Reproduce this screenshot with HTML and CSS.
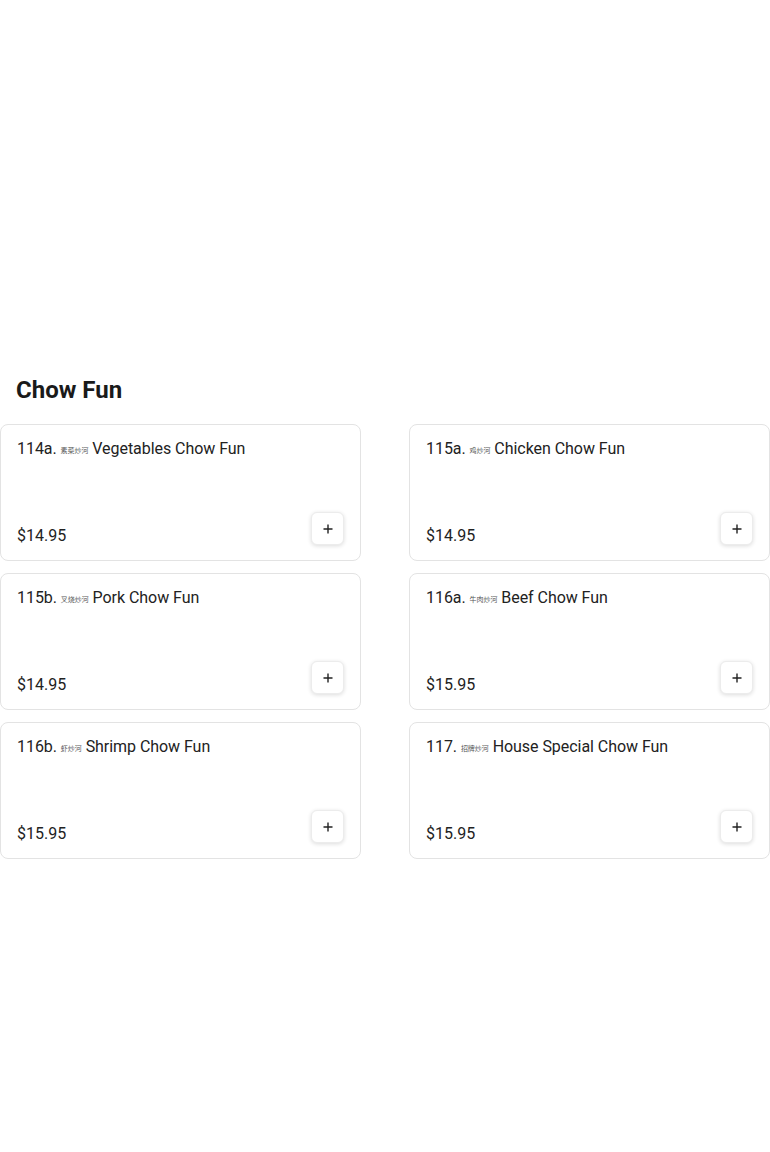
FILE: index.html
```html
<!DOCTYPE html>
<html lang="en">
<head>
<meta charset="utf-8">
<title>Chow Fun</title>
<link rel="stylesheet" href="styles.css">
</head>
<body>
<div class="hero"></div>
<section class="section">
  <h2 class="section-title">Chow Fun</h2>
  <div class="grid">
    <div class="card">
      <div class="card-title">114a. <span class="zh">素菜炒河</span> Vegetables Chow Fun</div>
      <div class="card-bottom">
        <span class="price">$14.95</span>
        <button class="add" aria-label="Add"><svg viewBox="0 0 12 12" width="12" height="12"><path d="M6 1.5v9M1.5 6h9" stroke="#222" stroke-width="1.4" fill="none"/></svg></button>
      </div>
    </div>
    <div class="card">
      <div class="card-title">115a. <span class="zh">鸡炒河</span> Chicken Chow Fun</div>
      <div class="card-bottom">
        <span class="price">$14.95</span>
        <button class="add" aria-label="Add"><svg viewBox="0 0 12 12" width="12" height="12"><path d="M6 1.5v9M1.5 6h9" stroke="#222" stroke-width="1.4" fill="none"/></svg></button>
      </div>
    </div>
    <div class="card">
      <div class="card-title">115b. <span class="zh">叉烧炒河</span> Pork Chow Fun</div>
      <div class="card-bottom">
        <span class="price">$14.95</span>
        <button class="add" aria-label="Add"><svg viewBox="0 0 12 12" width="12" height="12"><path d="M6 1.5v9M1.5 6h9" stroke="#222" stroke-width="1.4" fill="none"/></svg></button>
      </div>
    </div>
    <div class="card">
      <div class="card-title">116a. <span class="zh">牛肉炒河</span> Beef Chow Fun</div>
      <div class="card-bottom">
        <span class="price">$15.95</span>
        <button class="add" aria-label="Add"><svg viewBox="0 0 12 12" width="12" height="12"><path d="M6 1.5v9M1.5 6h9" stroke="#222" stroke-width="1.4" fill="none"/></svg></button>
      </div>
    </div>
    <div class="card">
      <div class="card-title">116b. <span class="zh">虾炒河</span> Shrimp Chow Fun</div>
      <div class="card-bottom">
        <span class="price">$15.95</span>
        <button class="add" aria-label="Add"><svg viewBox="0 0 12 12" width="12" height="12"><path d="M6 1.5v9M1.5 6h9" stroke="#222" stroke-width="1.4" fill="none"/></svg></button>
      </div>
    </div>
    <div class="card">
      <div class="card-title">117. <span class="zh">招牌炒河</span> House Special Chow Fun</div>
      <div class="card-bottom">
        <span class="price">$15.95</span>
        <button class="add" aria-label="Add"><svg viewBox="0 0 12 12" width="12" height="12"><path d="M6 1.5v9M1.5 6h9" stroke="#222" stroke-width="1.4" fill="none"/></svg></button>
      </div>
    </div>
  </div>
</section>
</body>
</html>
```
FILE: styles.css
```css
* { box-sizing: border-box; }
body {
  margin: 0;
  background: #fff;
  font-family: Roboto, "Noto Sans", "Noto Sans CJK SC", sans-serif;
  color: #202020;
}
.hero { height: 360px; }
.section-title {
  margin: 16px 16px 20px;
  font-size: 24px;
  line-height: 28px;
  font-weight: 700;
  color: #1a1a1a;
}
.grid {
  display: grid;
  grid-template-columns: 361px 361px;
  column-gap: 48px;
  row-gap: 12px;
}
.card {
  height: 137px;
  border: 1px solid #e3e3e3;
  border-radius: 8px;
  padding: 12px 16px 16px;
  display: flex;
  flex-direction: column;
  justify-content: space-between;
}
.card-title {
  font-size: 16px;
  line-height: 24px;
  color: #222;
  letter-spacing: -0.05px;
}
.zh {
  font-family: "Noto Sans CJK SC", sans-serif;
  font-size: 7px;
  color: #555;
  vertical-align: 1px;
}
.card-bottom {
  display: flex;
  justify-content: space-between;
  align-items: flex-end;
}
.price {
  font-size: 16px;
  line-height: 20px;
  color: #222;
  margin-bottom: -2px;
}
.add {
  width: 33px;
  height: 33px;
  padding: 0;
  border: 1px solid #ececec;
  border-radius: 6px;
  background: #fff;
  box-shadow: 0 1px 4px rgba(0,0,0,0.14);
  display: flex;
  align-items: center;
  justify-content: center;
  margin-bottom: -1px;
}
```
